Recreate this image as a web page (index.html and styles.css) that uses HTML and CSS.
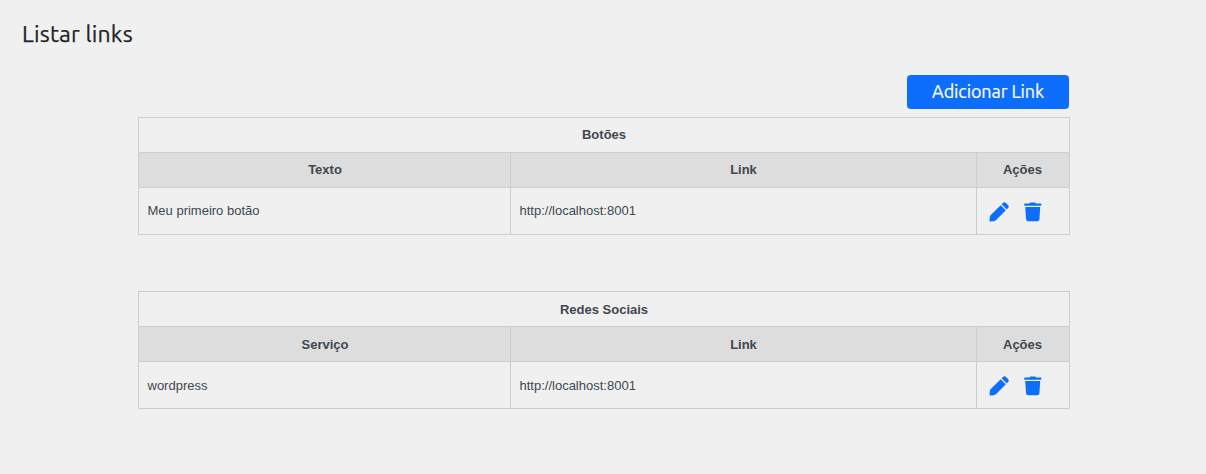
FILE: index.html
```html
<!DOCTYPE html>
<html lang="pt-BR">
<head>
<meta charset="utf-8">
<title>Listar links</title>
<link rel="stylesheet" href="styles.css">
</head>
<body>
<svg class="sprite" aria-hidden="true">
  <symbol id="pencil" viewBox="0 0 20 20">
    <path d="M11.7 3.2 16.8 8.3 7.2 18Q6.2 19.1 4.7 19.2L1.4 19.5Q.4 19.5.5 18.5L.8 15.2Q.9 13.9 1.8 13ZM12.6 2.3 14.2.8Q15.5-.3 16.8.8L19.2 3.2Q20.3 4.5 19.2 5.8L17.7 7.4Z"/>
  </symbol>
  <symbol id="trash" viewBox="0 0 18 20">
    <path d="M.9 1.4H5.3L5.9.7Q6.2.4 6.6.4H10.7Q11.2.4 11.5.7L12.1 1.4H16.6Q17.4 1.4 17.4 2.2V2.9Q17.4 3.7 16.6 3.7H.9Q.2 3.7.2 2.9V2.2Q.2 1.4.9 1.4ZM1.2 5H16.2L15.4 17.6Q15.1 19.3 13.4 19.3H4.1Q2.4 19.3 2.1 17.6Z"/>
  </symbol>
</svg>
<h1 class="title">Listar links</h1>
<main class="content">
  <div class="toolbar"><button class="add">Adicionar Link</button></div>
  <table class="links">
    <colgroup><col class="col-text"><col class="col-link"><col class="col-actions"></colgroup>
    <tr><th colspan="3">Botões</th></tr>
    <tr class="head"><th>Texto</th><th>Link</th><th>Ações</th></tr>
    <tr class="row"><td>Meu primeiro botão</td><td>http://localhost:8001</td>
      <td class="tools"><div class="actions"><svg class="pencil"><use href="#pencil"/></svg><svg class="trash"><use href="#trash"/></svg></div></td></tr>
  </table>
  <table class="links social">
    <colgroup><col class="col-text"><col class="col-link"><col class="col-actions"></colgroup>
    <tr><th colspan="3">Redes Sociais</th></tr>
    <tr class="head"><th>Serviço</th><th>Link</th><th>Ações</th></tr>
    <tr class="row"><td>wordpress</td><td>http://localhost:8001</td>
      <td class="tools"><div class="actions"><svg class="pencil"><use href="#pencil"/></svg><svg class="trash"><use href="#trash"/></svg></div></td></tr>
  </table>
</main>
</body>
</html>
```
FILE: styles.css
```css
* { box-sizing: border-box; }
body {
  margin: 0;
  padding-top: 18px;
  background: #f0f0f0;
  color: #3f474f;
  font: 13px/18px "Liberation Sans", Arial, sans-serif;
}
.sprite { display: none; }
.title {
  margin: 0 0 0 22px;
  height: 32px;
  color: #1d2327;
  font: 400 23px/32px Ubuntu, "Noto Sans", sans-serif;
  letter-spacing: .2px;
  -webkit-text-stroke: .25px;
}
.content { width: 932px; margin: 25px 0 0 138px; }
.toolbar { display: flex; justify-content: flex-end; padding-right: 1px; margin-bottom: 8px; }
.add {
  width: 162px;
  height: 34px;
  padding: 0 0 2px;
  border: 0;
  border-radius: 4px;
  background: #0d6efd;
  color: #fff;
  font: 400 18px/32px Ubuntu, "Noto Sans", sans-serif;
  letter-spacing: -.1px;
  -webkit-text-stroke: .2px;
}
.links {
  width: 932px;
  margin-bottom: 56px;
  table-layout: fixed;
  border-collapse: separate;
  border-spacing: 0;
  border: solid #cdcdcd;
  border-width: 1px 0 0 1px;
}
.col-text { width: 372px; }
.col-link { width: 466px; }
.col-actions { width: 93px; }
.links th, .links td {
  height: 35px;
  padding: 0 8.5px;
  border: solid #cdcdcd;
  border-width: 0 1px 1px 0;
}
.links .head th { background: #ddd; }
.links .head th:first-child { padding-left: 9.5px; }
.links .head th:last-child { padding-right: 9.5px; }
.links .row td { height: 47px; text-align: left; }
.social th, .social td:not(.tools) { padding-top: 2px; }
.actions { display: flex; gap: 15px; padding: 2px 0 0 3.5px; }
.actions svg { height: 20px; fill: #0d6efd; }
.pencil { width: 20px; }
.trash { width: 18px; }
```
